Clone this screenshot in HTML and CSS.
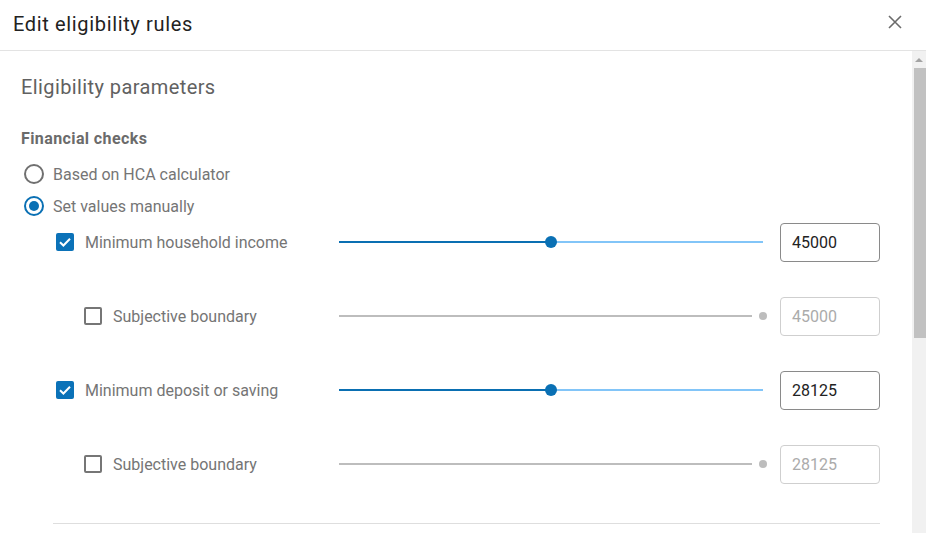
FILE: index.html
```html
<!DOCTYPE html>
<html lang="en">
<head>
    <meta charset="UTF-8">
    <meta name="viewport" content="width=device-width, initial-scale=1.0">
    <title>Edit eligibility rules</title>
    <link rel="stylesheet" href="styles.css">
</head>
<body>

<div class="dialog">
    <div class="dialog-header">
        <h1>Edit eligibility rules</h1>
        <button class="close-btn" aria-label="Close">
            <svg width="14" height="14" viewBox="0 0 14 14"><path d="M1 1L13 13M13 1L1 13" stroke="#6b6b6b" stroke-width="1.6" fill="none"/></svg>
        </button>
    </div>

    <div class="dialog-main">
        <div class="dialog-content">
            <h2>Eligibility parameters</h2>
            <h3>Financial checks</h3>

            <!-- Opciones de cálculo -->
            <label class="option">
                <span class="radio"></span>
                Based on HCA calculator
            </label>
            <label class="option">
                <span class="radio selected"></span>
                Set values manually
            </label>

            <div class="field-row">
                <label class="field-label">
                    <span class="checkbox checked">
                        <svg width="14" height="14" viewBox="0 0 14 14"><path d="M2 7.2L5.4 10.5L12 3.8" stroke="#fff" stroke-width="2" fill="none"/></svg>
                    </span>
                    Minimum household income
                </label>
                <div class="slider">
                    <div class="track-fill" style="width: 50%"></div>
                    <div class="thumb"></div>
                    <div class="track-rest"></div>
                </div>
                <input class="value-input" type="text" value="45000">
            </div>

            <div class="field-row sub">
                <label class="field-label">
                    <span class="checkbox"></span>
                    Subjective boundary
                </label>
                <div class="slider disabled">
                    <div class="track-off"></div>
                    <div class="dot"></div>
                </div>
                <input class="value-input" type="text" value="45000" disabled>
            </div>

            <div class="field-row">
                <label class="field-label">
                    <span class="checkbox checked">
                        <svg width="14" height="14" viewBox="0 0 14 14"><path d="M2 7.2L5.4 10.5L12 3.8" stroke="#fff" stroke-width="2" fill="none"/></svg>
                    </span>
                    Minimum deposit or saving
                </label>
                <div class="slider">
                    <div class="track-fill" style="width: 50%"></div>
                    <div class="thumb"></div>
                    <div class="track-rest"></div>
                </div>
                <input class="value-input" type="text" value="28125">
            </div>

            <div class="field-row sub">
                <label class="field-label">
                    <span class="checkbox"></span>
                    Subjective boundary
                </label>
                <div class="slider disabled">
                    <div class="track-off"></div>
                    <div class="dot"></div>
                </div>
                <input class="value-input" type="text" value="28125" disabled>
            </div>

            <hr class="divider">
        </div>

        <div class="scrollbar">
            <div class="scroll-arrow"></div>
            <div class="scroll-thumb"></div>
        </div>
    </div>
</div>

</body>
</html>
```

FILE: styles.css
```css
body {
    margin: 0;
    font-family: Roboto, "Liberation Sans", sans-serif;
    background-color: #fff;
}
.dialog {
    width: 926px;
    height: 533px;
    overflow: hidden;
}
.dialog-header {
    height: 50px;
    border-bottom: 1px solid #e3e3e3;
    display: flex;
    align-items: center;
    justify-content: space-between;
    padding: 0 24px 0 13px;
}
.dialog-header h1 {
    margin: 0;
    font-size: 20px;
    font-weight: 400;
    color: #222;
    letter-spacing: 0.65px;
    padding-bottom: 3px;
}
.close-btn {
    border: none;
    background: none;
    padding: 0;
    width: 14px;
    height: 14px;
    margin-bottom: 6px;
    cursor: pointer;
}
.dialog-main {
    display: flex;
    height: 482px;
}
.dialog-content {
    flex: 1;
    padding: 24px 32px 0 21px;
    overflow: hidden;
}
.dialog-content h2 {
    margin: 0;
    font-size: 20px;
    line-height: 24px;
    font-weight: 400;
    color: #616161;
    letter-spacing: 0.4px;
}
.dialog-content h3 {
    margin: 30px 0 9px;
    font-size: 16px;
    line-height: 20px;
    font-weight: 700;
    color: #6b6b6b;
    letter-spacing: 0.4px;
}
.option {
    display: flex;
    align-items: center;
    gap: 9px;
    height: 32px;
    font-size: 16px;
    color: #757575;
    padding-left: 3px;
}
.radio {
    width: 20px;
    height: 20px;
    box-sizing: border-box;
    border: 2px solid #707070;
    border-radius: 50%;
    display: flex;
    align-items: center;
    justify-content: center;
}
.radio.selected {
    border-color: #0a70b4;
}
.radio.selected::after {
    content: "";
    width: 10px;
    height: 10px;
    border-radius: 50%;
    background-color: #0a70b4;
}
.field-row {
    display: grid;
    grid-template-columns: 269px 1fr 100px;
    column-gap: 17px;
    align-items: center;
    height: 40px;
    margin-left: 32px;
    margin-bottom: 34px;
}
.field-label {
    display: flex;
    align-items: center;
    gap: 11px;
    font-size: 16px;
    color: #757575;
    padding-left: 3px;
}
.field-row.sub .field-label {
    padding-left: 31px;
}
.checkbox {
    width: 18px;
    height: 18px;
    box-sizing: border-box;
    border: 2px solid #767676;
    border-radius: 2px;
    display: flex;
    align-items: center;
    justify-content: center;
}
.checkbox.checked {
    border: none;
    background-color: #0b72b8;
}
.slider {
    display: flex;
    align-items: center;
    height: 12px;
}
.track-fill {
    height: 2px;
    background-color: #0a6fb2;
}
.track-rest {
    flex: 1;
    height: 2px;
    background-color: #82c5f8;
}
.thumb {
    width: 12px;
    height: 12px;
    border-radius: 50%;
    background-color: #0a70b4;
    margin: 0 -6px;
    position: relative;
    z-index: 1;
}
.track-off {
    flex: 1;
    height: 2px;
    background-color: #bdbdbd;
}
.dot {
    width: 8px;
    height: 8px;
    border-radius: 50%;
    background-color: #bdbdbd;
    margin-left: 7px;
    margin-right: -4px;
}
.value-input {
    width: 100px;
    height: 39px;
    box-sizing: border-box;
    border: 1px solid #8a8a8a;
    border-radius: 4px;
    padding: 0 11px;
    font-family: Roboto, "Liberation Sans", sans-serif;
    font-size: 16px;
    color: #222;
    background-color: #fff;
}
.value-input:disabled {
    border-color: #cfcfcf;
    color: #ababab;
}
.divider {
    border: none;
    border-top: 1px solid #dedede;
    margin: 39px 0 0 32px;
}
.scrollbar {
    width: 14px;
    background-color: #f1f1f1;
    display: flex;
    flex-direction: column;
    align-items: center;
}
.scroll-arrow {
    margin-top: 7px;
    width: 0;
    height: 0;
    border-left: 4px solid transparent;
    border-right: 4px solid transparent;
    border-bottom: 4px solid #a3a3a3;
}
.scroll-thumb {
    margin-top: 6px;
    width: 12px;
    height: 270px;
    background-color: #c1c1c1;
    margin-left: 2px;
}
```
